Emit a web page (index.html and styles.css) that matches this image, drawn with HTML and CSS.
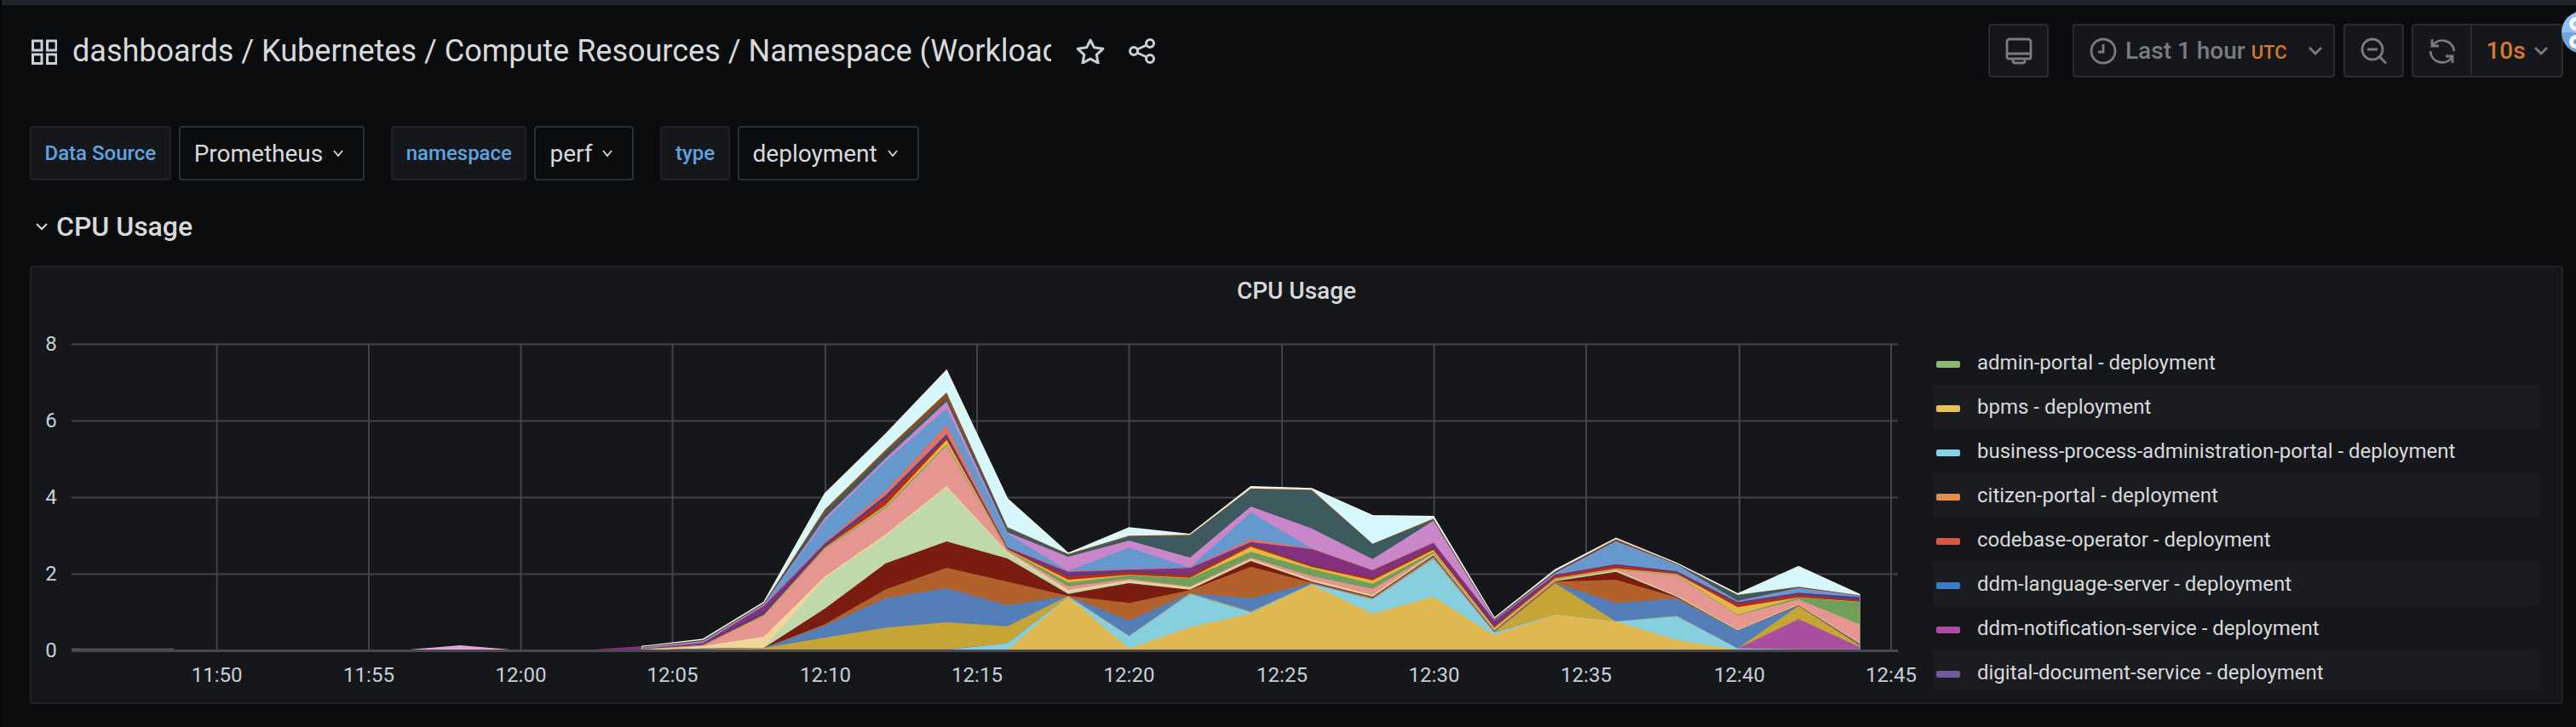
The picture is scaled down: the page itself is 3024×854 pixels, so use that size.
FILE: index.html
```html
<!DOCTYPE html>
<html lang="en">
<head>
<meta charset="utf-8">
<title>CPU Usage</title>
<link rel="stylesheet" href="styles.css">
</head>
<body>
<div class="topstrip"></div>
<header class="toolbar">
  <svg class="ic-grid" viewBox="0 0 31 30"><path d="M2.5 2h10.500v11H2.500zM19.500 2H30v11H19.500zM2.500 18h10.500v10.500H2.500zM19.500 18H30v10.500H19.500z"/></svg>
  <h1 class="title">dashboards / Kubernetes / Compute Resources / Namespace (Workload</h1>
  <svg class="ic-star" viewBox="0 0 34 30"><path d="M17 2l4.400 8.800 10.400 1.500-7.600 7 1.900 9.700-9.100-4.800-9.100 4.800 1.900-9.700-7.600-7 10.400-1.500z"/></svg>
  <svg class="ic-share" viewBox="0 0 32 30"><circle cx="6" cy="15" r="4.500"/><circle cx="25" cy="6" r="4.500"/><circle cx="25" cy="24" r="4.500"/><path d="M10 13l11-5M10 17l11 5"/></svg>
  <div class="tools">
    <button class="btn btn-tv"><svg class="ic-tool" viewBox="0 0 30 30"><path d="M4 1h22a3 3 0 0 1 3 3v18a2 2 0 0 1-2 2H3a2 2 0 0 1-2-2V4a3 3 0 0 1 3-3zM1 18h28M8 24v2.500a2.500 2.500 0 0 0 2.500 2.500h9a2.500 2.500 0 0 0 2.500-2.500V24"/></svg></button>
    <button class="btn btn-time">
      <svg class="ic-tool" viewBox="0 0 30 30"><circle cx="15" cy="15" r="14"/><path d="M15 7v9H9"/></svg>
      <span class="time-label">Last 1 hour</span><span class="utc">UTC</span>
      <svg class="chev chev-time" viewBox="0 0 16 10"><path d="M1 1l7 7 7-7"/></svg>
    </button>
    <button class="btn btn-zoom"><svg class="ic-tool" viewBox="0 0 30 30"><circle cx="13" cy="13" r="12"/><path d="M7 13h12M22 22l7 7.500"/></svg></button>
    <div class="btn-group">
      <button class="seg seg-refresh"><svg class="ic-tool" viewBox="0 0 30 30"><path d="M4 8A14 14 0 0 1 29 15M1 15A14 14 0 0 0 26 23M3 1v8h8M19 21h8v8"/></svg></button>
      <button class="seg seg-interval"><span class="interval">10s</span><svg class="chev" viewBox="0 0 16 10"><path d="M1 1l7 7 7-7"/></svg></button>
    </div>
  </div>
  <div class="ext-badge"><i class="ext-ring"></i><i class="ext-ring"></i></div>
</header>

<section class="vars">
  <div class="var"><span class="var-label">Data Source</span><span class="var-value">Prometheus<svg class="chev-sm" viewBox="0 0 12 10"><path d="M1 2l5 6 5-6"/></svg></span></div>
  <div class="var"><span class="var-label">namespace</span><span class="var-value">perf<svg class="chev-sm" viewBox="0 0 12 10"><path d="M1 2l5 6 5-6"/></svg></span></div>
  <div class="var"><span class="var-label">type</span><span class="var-value">deployment<svg class="chev-sm" viewBox="0 0 12 10"><path d="M1 2l5 6 5-6"/></svg></span></div>
</section>

<div class="row-title"><svg class="chev-row" viewBox="0 0 14 10"><path d="M1 2l6 6 6-6"/></svg><span>CPU Usage</span></div>

<article class="panel">
  <h2 class="panel-title">CPU Usage</h2>
  <div class="panel-body">
    <svg class="chart" viewBox="37 0 2220 462" width="2220" height="462">
      <g class="grid">
        <path d="M84 35.500H2228M84 125.500H2228M84 215.500H2228M84 305.500H2228"/>
        <path d="M254.600 35V396M433 35V396M611.500 35V396M789.500 35V396M969 35V396M1147 35V396M1325.500 35V396M1505 35V396M1683.500 35V396M1862 35V396M2042 35V396M2220 35V396"/>
      </g>
      <polygon class="bump" points="469,395 540,389 611,395"/>
      <polygon class="tail" points="683,395 754,390 754,395"/>
      <g transform="translate(754 31) scale(71.44 .33333)">
        <polygon class="l top" points="0,1078 1,1053 2,922 3,540 4,330 5,105 6,558 7,750 8,660 9,683 10,515 11,522 12,617 13,620 14,978 15,808 16,697 17,785 18,893 19,797 20,895 20,1092 0,1092"/>
        <polygon fill="#8a4f1f" points="0,1079 1,1055 2,925 3,595 4,385 5,183 6,658 7,752 8,688 9,685 10,521 11,526 12,716 13,628 14,980 15,813 16,700 17,787 18,896 19,868 20,898 20,1092 0,1092"/>
        <polygon fill="#3d5a5e" points="0,1080 1,1057 2,927 3,605 4,395 5,205 6,660 7,755 8,692 9,688 10,525 11,530 12,718 13,633 14,982 15,815 16,705 17,788 18,898 19,870 20,899 20,1092 0,1092"/>
        <polygon fill="#c987c9" points="0,1082 1,1060 2,929 3,625 4,415 5,215 6,676 7,762 8,705 9,765 10,585 11,662 12,770 13,635 14,984 15,820 16,708 17,790 18,918 19,872 20,900 20,1092 0,1092"/>
        <polygon fill="#6598cc" points="0,1084 1,1063 2,931 3,635 4,425 5,240 6,680 7,812 8,730 9,800 10,605 11,733 12,808 13,711 14,985 15,823 16,710 17,792 18,920 19,874 20,902 20,1092 0,1092"/>
        <polygon fill="#dd7268" points="0,1085 1,1065 2,933 3,712 4,530 5,298 6,728 7,813 8,805 9,800 10,700 11,733 12,808 13,711 14,986 15,824 16,787 17,812 18,921 19,888 20,903 20,1092 0,1092"/>
        <polygon fill="#85307f" points="0,1086 1,1066 2,935 3,715 4,545 5,330 6,730 7,815 8,808 9,802 10,710 11,735 12,810 13,713 14,987 15,825 16,788 17,813 18,922 19,889 20,904 20,1092 0,1092"/>
        <polygon fill="#2c4a9c" points="0,1087 1,1070 2,955 3,720 4,548 5,332 6,731 7,825 8,811 9,821 10,713 11,790 12,836 13,727 14,1000 15,828 16,790 17,815 18,923 19,890 20,905 20,1092 0,1092"/>
        <polygon fill="#b52b1c" points="0,1088 1,1072 2,962 3,725 4,555 5,340 6,733 7,830 8,815 9,825 10,717 11,792 12,838 13,730 14,1005 15,830 16,793 17,818 18,928 19,895 20,915 20,1092 0,1092"/>
        <polygon fill="#e2b845" points="0,1088 1,1073 2,967 3,730 4,580 5,350 6,736 7,843 8,826 9,836 10,727 11,798 12,845 13,738 14,1012 15,838 16,803 17,823 18,940 19,905 20,920 20,1092 0,1092"/>
        <polygon fill="#6f9f5b" points="0,1089 1,1074 2,968 3,733 4,585 5,365 6,738 7,853 8,828 9,838 10,745 11,805 12,857 13,745 14,1016 15,841 16,806 17,826 18,966 19,906 20,922 20,1092 0,1092"/>
        <polygon fill="#e69691" points="0,1089 1,1075 2,970 3,735 4,590 5,370 6,740 7,867 8,840 9,867 10,765 11,830 12,875 13,750 14,1018 15,843 16,808 17,828 18,968 19,912 20,1000 20,1092 0,1092"/>
        <polygon fill="#f2d599" points="0,1090 1,1077 2,1043 3,832 4,683 5,513 6,745 7,880 8,845 9,870 10,770 11,843 12,897 13,752 14,1019 15,845 16,809 17,899 18,1019 19,929 20,1065 20,1092 0,1092"/>
        <polygon fill="#bfd9ab" points="0,1090 1,1082 2,1083 3,838 4,690 5,517 6,750 7,885 8,850 9,875 10,773 11,848 12,900 13,755 14,1020 15,846 16,810 17,900 18,1020 19,930 20,1066 20,1092 0,1092"/>
        <polygon fill="#7b1c10" points="0,1091 1,1085 2,1083 3,945 4,785 5,708 6,768 7,893 8,855 9,878 10,777 11,850 12,903 13,757 14,1022 15,848 16,815 17,903 18,1022 19,932 20,1068 20,1092 0,1092"/>
        <polygon fill="#b1622c" points="0,1091 1,1086 2,1083 3,1000 4,877 5,801 6,850 7,900 8,925 9,880 10,797 11,853 12,905 13,760 14,1024 15,850 16,843 17,905 18,1022 19,933 20,1070 20,1092 0,1092"/>
        <polygon fill="#537eb8" points="0,1091 1,1087 2,1083 3,1005 4,908 5,873 6,933 7,900 8,988 9,890 10,908 11,855 12,908 13,762 14,1026 15,855 16,925 17,910 18,1022 19,935 20,1072 20,1092 0,1092"/>
        <polygon fill="#c4a535" points="0,1092 1,1088 2,1083 3,1047 4,1012 5,993 6,1007 7,900 8,1040 9,890 10,955 11,857 12,910 13,765 14,1028 15,855 16,990 17,970 18,1085 19,935 20,1075 20,1092 0,1092"/>
        <polygon fill="#aa4fa0" points="0,1092 1,1089 2,1088 3,1088 4,1088 5,1088 6,1067 7,903 8,1042 9,893 10,958 11,858 12,912 13,770 14,1030 15,965 16,990 17,972 18,1085 19,982 20,1080 20,1092 0,1092"/>
        <polygon fill="#86cfdf" points="0,1092 1,1090 2,1089 3,1090 4,1090 5,1090 6,1067 7,903 8,1042 9,893 10,958 11,858 12,912 13,770 14,1030 15,965 16,990 17,972 18,1085 19,1088 20,1088 20,1092 0,1092"/>
        <polygon fill="#e0b852" points="0,1092 5,1092 6,1092 7,903 8,1085 9,1010 10,962 11,860 12,963 13,903 14,1038 15,965 16,990 17,1055 18,1090 19,1092 20,1092 0,1092"/>
      </g>
      <path class="axis" d="M84 395.500H2228"/>
      <path class="axis-start" d="M84 393.500H204"/>
      <g class="ylabels">
        <text x="60" y="43">8</text><text x="60" y="133">6</text><text x="60" y="223">4</text><text x="60" y="313">2</text><text x="60" y="403">0</text>
      </g>
      <g class="xlabels">
        <text x="254.600" y="432">11:50</text><text x="433" y="432">11:55</text><text x="611.500" y="432">12:00</text><text x="789.500" y="432">12:05</text><text x="969" y="432">12:10</text><text x="1147" y="432">12:15</text><text x="1325.500" y="432">12:20</text><text x="1505" y="432">12:25</text><text x="1683.500" y="432">12:30</text><text x="1862" y="432">12:35</text><text x="2042" y="432">12:40</text><text x="2220" y="432">12:45</text>
      </g>
    </svg>
    <ul class="legend">
      <li class="lg"><i class="sw s1"></i>admin-portal - deployment</li>
      <li class="lg"><i class="sw s2"></i>bpms - deployment</li>
      <li class="lg"><i class="sw s3"></i>business-process-administration-portal - deployment</li>
      <li class="lg"><i class="sw s4"></i>citizen-portal - deployment</li>
      <li class="lg"><i class="sw s5"></i>codebase-operator - deployment</li>
      <li class="lg"><i class="sw s6"></i>ddm-language-server - deployment</li>
      <li class="lg"><i class="sw s7"></i>ddm-notification-service - deployment</li>
      <li class="lg"><i class="sw s8"></i>digital-document-service - deployment</li>
    </ul>
  </div>
</article>
</body>
</html>
```
FILE: styles.css
```css
* { box-sizing: border-box; }
html, body { margin: 0; height: 854px; overflow: hidden; }
body {
  background: #0b0c0e;
  color: #d8d9da;
  font-family: Roboto, "Liberation Sans", sans-serif;
  border-left: 2px solid #060607;
  position: relative;
}
.topstrip { height: 6px; background: #22252b; margin-left: -2px; }

.toolbar { display: flex; align-items: center; height: 63px; margin-top: 22px; padding-left: 34px; }
.ic-grid { width: 31px; height: 30px; fill: none; stroke: #c7d0d9; stroke-width: 3; flex: none; margin-top: 2px; }
.title { margin: 0 0 0 18px; width: 1149px; flex: none; overflow: hidden; white-space: nowrap; font-size: 36px; font-weight: 400; color: #d8d9da; }
.ic-star { width: 34px; height: 30px; flex: none; margin-left: 29px; fill: none; stroke: #c7d0d9; stroke-width: 3; stroke-linejoin: round; }
.ic-share { width: 32px; height: 30px; flex: none; margin-left: 28px; fill: none; stroke: #c7d0d9; stroke-width: 3; }
.tools { margin-left: auto; margin-right: 15px; display: flex; align-items: stretch; height: 63px; }
.btn, .btn-group { background: #16171b; border: 2px solid #2a2b2f; border-radius: 4px; color: #7b7c82; padding: 0; font: inherit; display: flex; align-items: center; justify-content: center; }
.btn-tv { width: 71px; margin-right: 28px; }
.btn-time { width: 308px; margin-right: 10px; justify-content: flex-start; padding-left: 19px; }
.btn-zoom { width: 71px; margin-right: 9px; }
.btn-group { width: 178px; }
.seg { background: none; border: 0; padding: 0; height: 100%; display: flex; align-items: center; justify-content: center; font: inherit; }
.seg-refresh { width: 69px; border-right: 2px solid #2a2b2f; }
.seg-interval { flex: 1; gap: 10px; }
.ic-tool { width: 30px; height: 30px; fill: none; stroke: #7b7c82; stroke-width: 2.8; flex: none; overflow: visible; }
.time-label { font-size: 28px; font-weight: 500; margin-left: 11px; }
.utc { font-size: 22px; font-weight: 500; color: #d6792b; margin-left: 7px; margin-top: 4px; }
.chev { width: 16px; height: 10px; fill: none; stroke: #7b7c82; stroke-width: 2.8; flex: none; }
.chev-time { margin-left: 25px; }
.interval { font-size: 28px; font-weight: 500; color: #d6792b; }
.ext-badge { position: absolute; right: -33px; top: 13px; width: 50px; height: 50px; border-radius: 50%; background: linear-gradient(#8fc1f3 0 50%, #6ea6dc 50% 100%); display: flex; flex-direction: column; justify-content: center; gap: 5px; padding-left: 9px; }
.ext-ring { display: block; width: 16px; height: 16px; border-radius: 50%; border: 5px solid #f4f8fc; flex: none; }

.vars { display: flex; margin: 57px 0 0 33px; gap: 31px; }
.var { display: flex; gap: 9px; height: 64px; }
.var-label { display: flex; align-items: center; padding: 0 15.5px; background: #16171b; border: 2px solid #1f2125; border-radius: 4px; color: #5aa5e2; font-size: 24px; font-weight: 500; }
.var-value { display: flex; align-items: center; padding: 0 23px 0 16px; background: #0b0c0e; border: 2px solid #2c3032; border-radius: 4px; color: #d8d9da; font-size: 28px; }
.chev-sm { width: 12px; height: 10px; margin-left: 12px; fill: none; stroke: #d8d9da; stroke-width: 1.8; }

.row-title { display: flex; align-items: center; margin: 31px 0 0 40px; height: 46px; font-size: 32px; font-weight: 500; color: #d8d9da; }
.chev-row { width: 14px; height: 10px; margin-right: 10px; fill: none; stroke: #d8d9da; stroke-width: 2; }

.panel { position: absolute; left: 33px; top: 312px; width: 2974px; height: 515px; background: #16171b; border: 2px solid #202226; border-radius: 4px; }
.panel-title { margin: 0; height: 55px; padding-top: 10px; text-align: center; font-size: 28px; font-weight: 500; line-height: 36px; color: #d8d9da; }
.panel-body { display: flex; }
.chart { flex: none; display: block; }
.grid path { fill: none; stroke: #434448; stroke-width: 2; }
.bump { fill: #e3a6dc; }
.tail { fill: #85307f; }
.l.top { fill: #d6f8fc; stroke: #eef6ee; stroke-width: 1.5; vector-effect: non-scaling-stroke; }
.axis { stroke: #48494d; stroke-width: 3; fill: none; }
.axis-start { stroke: #505155; stroke-width: 2; fill: none; }
.ylabels text { font-size: 24px; fill: #c7d0d9; text-anchor: middle; }
.xlabels text { font-size: 24px; fill: #c7d0d9; text-anchor: middle; }

.legend { list-style: none; margin: 31px 0 0 12px; padding: 0; width: 713px; height: 410px; overflow: hidden; }
.lg { display: flex; align-items: center; height: 52px; padding-left: 4px; font-size: 24px; color: #d8d9da; white-space: nowrap; }
.lg:nth-child(even) { background: #1b1c20; }
.sw { width: 28px; height: 8px; border-radius: 2px; margin-right: 20px; margin-top: 4px; flex: none; }
.s1 { background: #8ab573; } .s2 { background: #e5c158; } .s3 { background: #86d3e3; } .s4 { background: #e58d4f; }
.s5 { background: #d4574a; } .s6 { background: #3f7bc4; } .s7 { background: #ae4ba5; } .s8 { background: #6c5a9c; }
```
